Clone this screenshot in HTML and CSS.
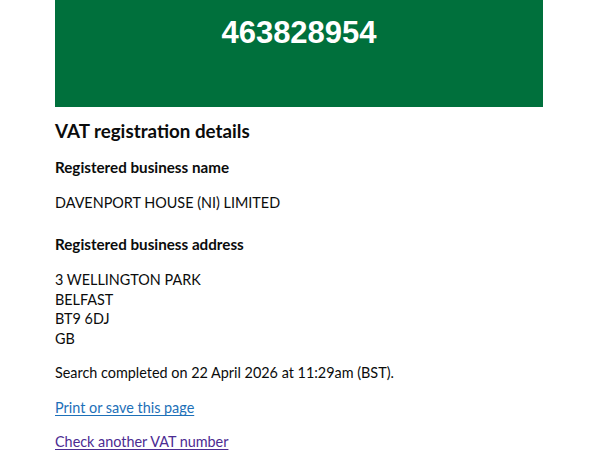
FILE: index.html
```html
<!DOCTYPE html>
<html lang="en">
<head>
<meta charset="utf-8">
<title>VAT registration details</title>
<link rel="stylesheet" href="styles.css">
</head>
<body>
<main class="page">
  <div class="panel">
    <div class="panel-number">463828954</div>
  </div>
  <h2 class="heading">VAT registration details</h2>
  <h3 class="label">Registered business name</h3>
  <p class="body">DAVENPORT HOUSE (NI) LIMITED</p>
  <h3 class="label">Registered business address</h3>
  <p class="body address">3 WELLINGTON PARK<br>BELFAST<br>BT9 6DJ<br>GB</p>
  <p class="body search">Search completed on 22 April 2026 at 11:29am (BST).</p>
  <p class="body print"><a class="link" href="#">Print or save this page</a></p>
  <p class="body check"><a class="link visited" href="#">Check another VAT number</a></p>
</main>
</body>
</html>
```

FILE: styles.css
```css
html, body {
  margin: 0;
  padding: 0;
  background: #ffffff;
}
body {
  font-family: Lato, "Liberation Sans", Arial, sans-serif;
  color: #0b0c0c;
}
.page {
  width: 488px;
  margin-left: 55px;
}
.panel {
  background: #00703c;
  height: 107px;
  display: flex;
  justify-content: center;
}
.panel-number {
  color: #ffffff;
  font-family: "Liberation Sans", Arial, sans-serif;
  font-weight: 700;
  font-size: 31px;
  line-height: 34px;
  margin-top: 16px;
}
.heading {
  font-size: 18.8px;
  font-weight: 700;
  line-height: 24px;
  margin: 12px 0 0;
}
.label {
  font-size: 15.2px;
  font-weight: 700;
  line-height: 20px;
  margin: 14px 0 0;
}
.body {
  font-size: 14.4px;
  line-height: 19.4px;
  margin: 16px 0 0;
}
.body + .label {
  margin-top: 22px;
}
.address {
  margin-top: 16px;
}
.search {
  margin-top: 15px;
}
.print {
  margin-top: 16px;
}
.check {
  margin-top: 14px;
}
.link {
  color: #1d70b8;
  text-decoration: underline;
  text-underline-offset: 2px;
  text-decoration-thickness: 1px;
}
.link.visited {
  color: #4c2c92;
}
```
